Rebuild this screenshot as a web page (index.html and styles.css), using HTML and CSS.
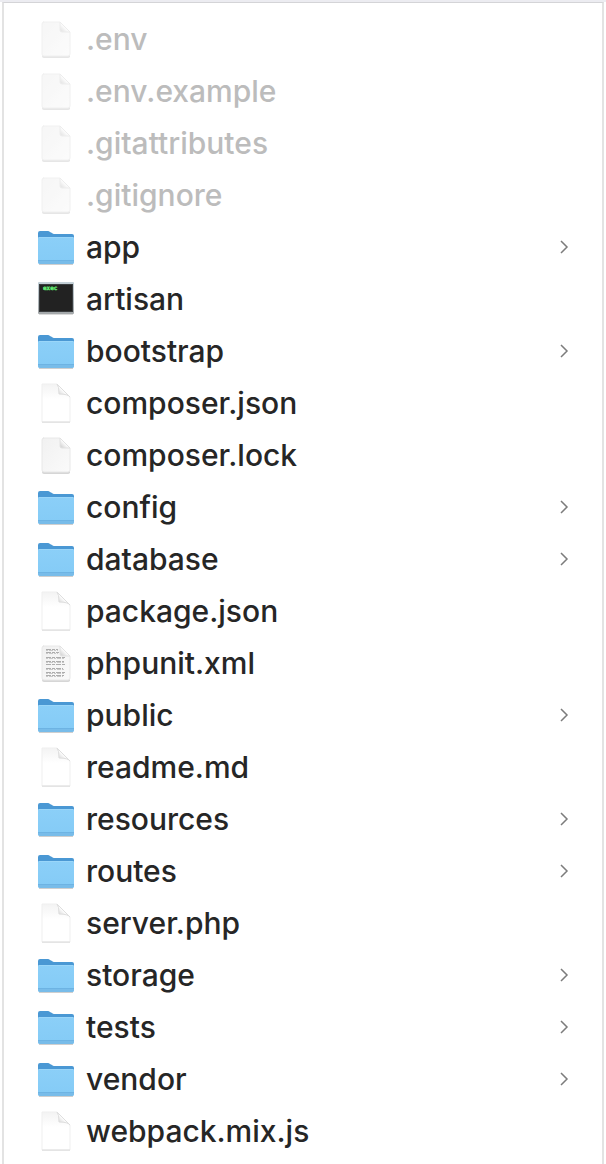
FILE: index.html
```
<!DOCTYPE html>
<html lang="en">
<head>
	<meta charset="UTF-8">
	<title>Files</title>
	<link rel="stylesheet" href="styles.css">
</head>

<body>
<svg class="defs" aria-hidden="true">
	<defs>
		<linearGradient id="blue" x1="0" y1="0" x2="0" y2="1">
			<stop offset="0" stop-color="#8bcff8"/>
			<stop offset="1" stop-color="#84cbf6"/>
		</linearGradient>
		<linearGradient id="grey" x1="0" y1="0" x2="1" y2="1">
			<stop offset="0" stop-color="#f1f1f1"/>
			<stop offset="1" stop-color="#fafafa"/>
		</linearGradient>
		<linearGradient id="shade" x1="0" y1="0" x2="0" y2="1">
			<stop offset="0" stop-color="#f3f3f3"/>
			<stop offset="0.4" stop-color="#fff"/>
		</linearGradient>
		<linearGradient id="fold" x1="0" y1="1" x2="1" y2="0">
			<stop offset="0" stop-color="#c8c8c8"/>
			<stop offset="0.5" stop-color="#fff"/>
		</linearGradient>
		<linearGradient id="frame" x1="0" y1="0" x2="0" y2="1">
			<stop offset="0" stop-color="#c3d0d7"/>
			<stop offset="1" stop-color="#a3a7a9"/>
		</linearGradient>
	</defs>

	<symbol id="folder" viewBox="0 0 38 44">
		<path d="M2 39h34v1H2z" fill="#cfcfcf"/>
		<path d="M1 8q0-2 2-2h8q1 0 2 1l2 1q1 1 2 1h18q2 0 2 2v8H1z" fill="#4a98d4"/>
		<path d="M1 13q0-1 1-1h34q1 0 1 1v24q0 2-2 2H3q-2 0-2-2z" fill="url(#blue)"/>
		<path d="M2 12.500h34" stroke="#9ad6f9"/>
		<path d="M1 35h36v2q0 2-2 2H3q-2 0-2-2z" fill="#78bce9"/>
		<path d="M1 35.500h36" stroke="#6db3e3"/>
	</symbol>

	<symbol id="page" viewBox="0 0 38 44">
		<path d="M5 41h28v1H5z" fill="#e6e6e6"/>
		<path d="M5 3h15l13 13v25H5z" fill="url(#shade)" stroke="#efefef"/>
		<path d="M5 41h28" stroke="#dedede"/>
		<path d="M20 3q2 2 2 10q9 0 11 3z" fill="url(#fold)" stroke="#dedede"/>
	</symbol>

	<symbol id="sheet" viewBox="0 0 38 44">
		<path d="M5 38h28v2q-1 1-2 1H7q-2 0-2-2z" fill="#d6d6d6"/>
		<path d="M6 5h17l10 10v22q0 2-2 2H7q-2 0-2-2V7q0-2 2-2z" fill="url(#grey)" stroke="#e8e8e8"/>
		<path d="M23 5v8q0 2 2 2h8z" fill="url(#fold)" stroke="#e2e2e2"/>
	</symbol>

	<symbol id="text" viewBox="0 0 38 44">
		<use href="#sheet"/>
		<g fill="none" stroke="#adadad">
			<path d="M9 8.500h12M9 11.500h13M9 16.500h19M9 20.500h18M9 23.500h19M9 27.500h17M9 31.500h19M9 34.500h18" stroke-dasharray="5 1 3 1"/>
			<path d="M9 9.500h12M9 12.500h12M9 17.500h18M9 21.500h19M9 28.500h18M9 32.500h19M9 35.500h17" stroke="#c8c8c8" stroke-dasharray="2 1 4 1"/>
		</g>
	</symbol>

	<symbol id="chevron" viewBox="0 0 12 18">
		<path d="M2 3l6 6l-6 6" fill="none" stroke="#7c7c7c" stroke-width="1.500"/>
	</symbol>
</svg>

<ul class="files">
	<li class="dim"><a href="#"><svg class="icon"><use href="#sheet"/></svg><span>.env</span></a></li>
	<li class="dim"><a href="#"><svg class="icon"><use href="#sheet"/></svg><span>.env.example</span></a></li>
	<li class="dim"><a href="#"><svg class="icon"><use href="#sheet"/></svg><span>.gitattributes</span></a></li>
	<li class="dim"><a href="#"><svg class="icon"><use href="#sheet"/></svg><span>.gitignore</span></a></li>
	<li><a href="#"><svg class="icon"><use href="#folder"/></svg><span>app</span><svg class="arrow"><use href="#chevron"/></svg></a></li>
	<li>
		<a href="#">
			<svg class="icon" viewBox="0 0 38 44">
				<path d="M2 36h34v2H2z" fill="#dadada"/>
				<rect x="1" y="5" width="36" height="32" rx="1" fill="url(#frame)"/>
				<rect x="2" y="7" width="34" height="28" fill="#3a3d3f"/>
				<rect x="3" y="8" width="32" height="26" fill="#222"/>
				<text x="6" y="13" class="exec-text">exec</text>
			</svg>
			<span>artisan</span>
		</a>
	</li>
	<li><a href="#"><svg class="icon"><use href="#folder"/></svg><span>bootstrap</span><svg class="arrow"><use href="#chevron"/></svg></a></li>
	<li><a href="#"><svg class="icon"><use href="#page"/></svg><span>composer.json</span></a></li>
	<li><a href="#"><svg class="icon"><use href="#sheet"/></svg><span>composer.lock</span></a></li>
	<li><a href="#"><svg class="icon"><use href="#folder"/></svg><span>config</span><svg class="arrow"><use href="#chevron"/></svg></a></li>
	<li><a href="#"><svg class="icon"><use href="#folder"/></svg><span>database</span><svg class="arrow"><use href="#chevron"/></svg></a></li>
	<li><a href="#"><svg class="icon"><use href="#page"/></svg><span>package.json</span></a></li>
	<li><a href="#"><svg class="icon"><use href="#text"/></svg><span>phpunit.xml</span></a></li>
	<li><a href="#"><svg class="icon"><use href="#folder"/></svg><span>public</span><svg class="arrow"><use href="#chevron"/></svg></a></li>
	<li><a href="#"><svg class="icon"><use href="#page"/></svg><span>readme.md</span></a></li>
	<li><a href="#"><svg class="icon"><use href="#folder"/></svg><span>resources</span><svg class="arrow"><use href="#chevron"/></svg></a></li>
	<li><a href="#"><svg class="icon"><use href="#folder"/></svg><span>routes</span><svg class="arrow"><use href="#chevron"/></svg></a></li>
	<li><a href="#"><svg class="icon"><use href="#page"/></svg><span>server.php</span></a></li>
	<li><a href="#"><svg class="icon"><use href="#folder"/></svg><span>storage</span><svg class="arrow"><use href="#chevron"/></svg></a></li>
	<li><a href="#"><svg class="icon"><use href="#folder"/></svg><span>tests</span><svg class="arrow"><use href="#chevron"/></svg></a></li>
	<li><a href="#"><svg class="icon"><use href="#folder"/></svg><span>vendor</span><svg class="arrow"><use href="#chevron"/></svg></a></li>
	<li><a href="#"><svg class="icon"><use href="#page"/></svg><span>webpack.mix.js</span></a></li>
</ul>

</body>
</html>
```
FILE: styles.css
```
* { margin:0; padding:0; box-sizing:border-box;}
body { background:#fff; border-top:2px solid #ececf1; font-family:Inter, "Liberation Sans", sans-serif; font-size:30px; font-weight:500; line-height:52px; color:#262626;}
.defs { position:absolute; width:0; height:0;}

.files { list-style:none; margin:0 2px; padding:10px 31px 7px 33px; border:2px solid #e3e3e3; border-top:1px solid #d4d4d7; border-bottom:0;}
.files a { display:flex; align-items:center; height:52px; color:inherit; text-decoration:none;}
.files a:hover { background:#f2f2f2;}

.icon { width:38px; height:44px; flex:none; margin-right:11px;}
.arrow { width:12px; height:18px; flex:none; margin-left:auto;}
.exec-text { font-family:"DejaVu Sans Mono", monospace; font-size:6px; font-weight:bold; fill:#66f578; stroke:#66f578; stroke-width:0.3;}

.dim { color:#bcbcbc;}
.dim .icon { opacity:0.6;}
```
